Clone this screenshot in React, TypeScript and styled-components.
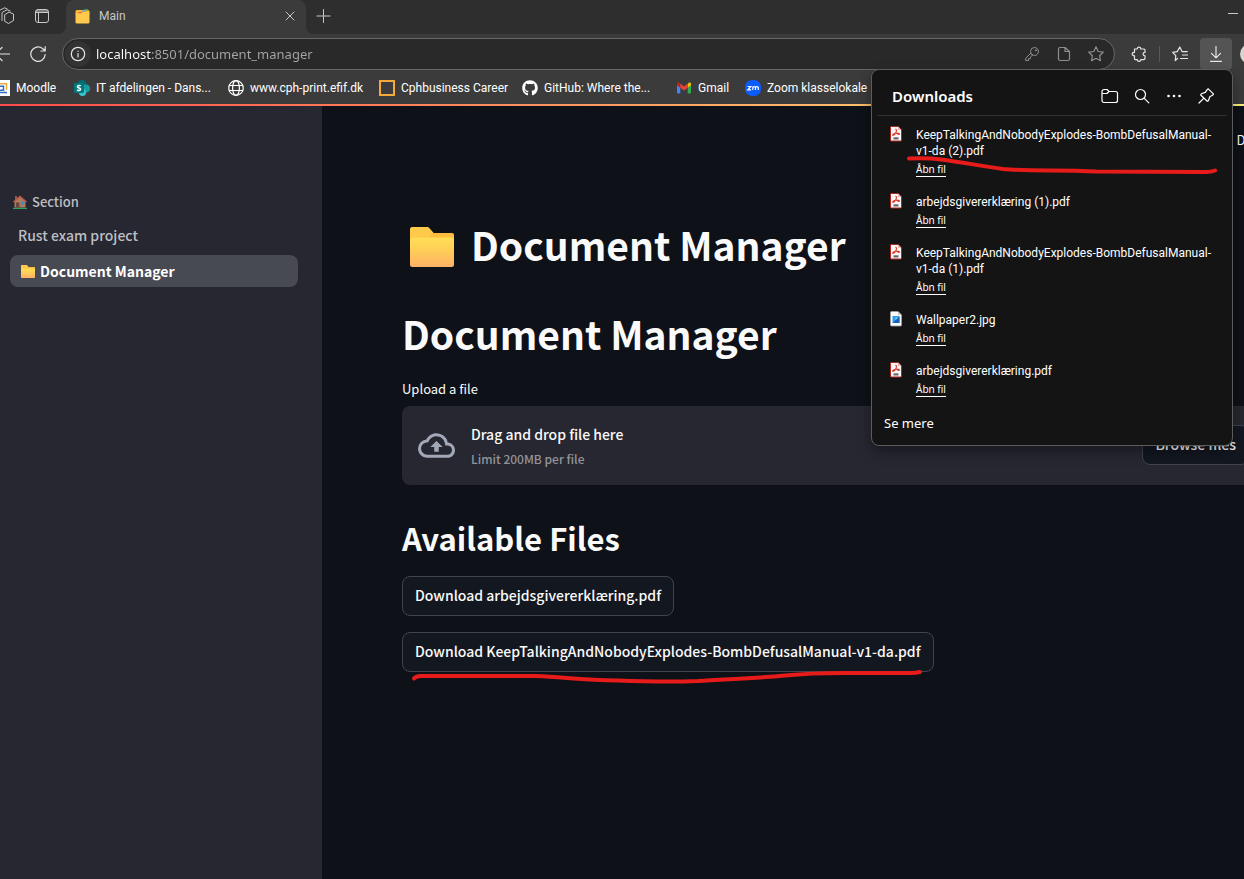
import React from 'react';
import styled, { createGlobalStyle } from 'styled-components';
import { FaGithub } from 'react-icons/fa';
import { MdOutlineCloudUpload } from 'react-icons/md';

const uiFont = `'Noto Sans', 'Open Sans', sans-serif`;
const labelFont = `Roboto, 'Noto Sans', sans-serif`;
const appFont = `'Noto Sans CJK SC', 'Noto Sans CJK JP', 'Noto Sans', sans-serif`;

const GlobalStyle = createGlobalStyle`
  *, *::before, *::after { box-sizing: border-box; }
  html, body, #root { height: 100%; }
  body { margin: 0; background: #0e1117; overflow: hidden; }
  button, input { font: inherit; color: inherit; margin: 0; }
  svg { display: block; flex: none; }
`;

/* ---------- Browser chrome ---------- */

const Window = styled.div`
  position: relative;
  display: flex;
  flex-direction: column;
  min-height: 100vh;
  overflow: hidden;
  font-family: ${uiFont};
  color: #fff;
`;

const TabStrip = styled.div`
  display: flex;
  height: 34px;
  background: #2e2e2e;
  color: #c8c8c8;
`;

const StripActions = styled.div`
  display: flex;
  align-items: center;
  gap: 18px;
  width: 71px;
  margin-left: -5px;
  padding-bottom: 2px;
`;

const IconButton = styled.button<{ $w?: number; $h?: number; $active?: boolean }>`
  display: flex;
  align-items: center;
  justify-content: center;
  flex: none;
  width: ${p => p.$w ?? 16}px;
  height: ${p => p.$h ?? 16}px;
  padding: 0;
  border: 0;
  border-radius: 4px;
  background: ${p => (p.$active ? '#545454' : 'transparent')};
`;

const Tab = styled.div`
  position: relative;
  display: flex;
  align-items: center;
  width: 240px;
  padding: 0 8px 2px 9px;
  border-radius: 8px 8px 0 0;
  background: #3b3b3b;
  font-family: ${labelFont};
  font-size: 12px;

  &::before, &::after {
    content: '';
    position: absolute;
    bottom: 0;
    width: 8px;
    height: 8px;
  }
  &::before {
    left: -8px;
    background: radial-gradient(circle at 0 0, #2e2e2e 8px, #3b3b3b 8px);
  }
  &::after {
    right: -8px;
    background: radial-gradient(circle at 100% 0, #2e2e2e 8px, #3b3b3b 8px);
  }
`;

const TabTitle = styled.span`
  flex: 1;
  margin-left: 9px;
`;

const StripEnd = styled.div`
  display: flex;
  flex: 1;
  align-items: center;
  justify-content: space-between;
  padding: 0 6px 2px 9px;
`;

const Toolbar = styled.div`
  display: flex;
  align-items: center;
  height: 36px;
  padding-top: 4px;
  background: #3b3b3b;
  color: #e6e6e6;
`;

const NavButtons = styled.div`
  display: flex;
  align-items: center;
  gap: 20px;
  width: 68px;
  margin-left: -6px;
`;

const AddressBar = styled.label`
  display: flex;
  flex: 1;
  align-items: center;
  gap: 16px;
  height: 32px;
  padding: 0 10px 0 2px;
  border: 1px solid #676767;
  border-radius: 16px;
  background: #292929;
  color: #8f8f8f;
`;

const SiteInfo = styled.span`
  display: flex;
  align-items: center;
  justify-content: center;
  width: 26px;
  height: 26px;
  margin-right: -11px;
  border-radius: 13px;
  background: #333;
  color: #e6e6e6;
`;

const AddressInput = styled.input`
  flex: 1;
  min-width: 0;
  height: 24px;
  padding: 0;
  border: 0;
  outline: 0;
  font-size: 13px;
  background: linear-gradient(90deg, #fff 56px, #a6a6a6 56px);
  background-clip: text;
  -webkit-background-clip: text;
  -webkit-text-fill-color: transparent;
`;

const ToolActions = styled.div`
  display: flex;
  flex: none;
  align-items: center;
  width: 129px;
  padding-left: 16px;
`;

const Separator = styled.span`
  flex: none;
  width: 1px;
  height: 16px;
  margin: 0 12px;
  background: #5a5a5a;
`;

const DownloadsToggle = styled(IconButton)`
  margin-left: 12px;
`;

const Avatar = styled.span`
  flex: none;
  width: 20px;
  height: 20px;
  margin-left: 8px;
  border-radius: 10px;
  background: #d8d4cf;
`;

const BookmarkBar = styled.nav`
  display: flex;
  align-items: center;
  height: 34px;
  margin-left: -6px;
  padding-top: 1px;
  background: #3b3b3b;
  font-family: ${labelFont};
  font-size: 12px;
  line-height: 16px;
`;

const Bookmark = styled.a<{ $w: number }>`
  display: flex;
  align-items: center;
  flex: none;
  gap: 6px;
  width: ${p => p.$w}px;
  color: #fff;
  text-decoration: none;
  white-space: nowrap;
`;

/* ---------- Downloads flyout ---------- */

const Flyout = styled.section`
  position: absolute;
  top: 69px;
  right: 11px;
  z-index: 5;
  width: 362px;
  padding: 0 5px 12px;
  border: 1px solid #5c5c5c;
  border-radius: 8px;
  background: #141414;
  box-shadow: 0 6px 14px rgba(0, 0, 0, 0.35);
`;

const FlyoutHeader = styled.header`
  display: flex;
  align-items: center;
  height: 46px;
  padding: 7px 12px 0 15px;
  border-bottom: 1px solid #333;
`;

const FlyoutTitle = styled.h2`
  flex: 1;
  margin: 0;
  font-size: 15px;
  line-height: 20px;
  font-weight: 600;
`;

const FlyoutTools = styled.div`
  display: flex;
  gap: 14px;
  margin-top: -1px;
`;

const DownloadList = styled.ul`
  display: flex;
  flex-direction: column;
  gap: 16px;
  margin: 0;
  padding: 10px 0 16px 13px;
  list-style: none;
`;

const DownloadItem = styled.li`
  display: flex;
  gap: 14px;
`;

const DownloadText = styled.div`
  display: flex;
  flex-direction: column;
  align-items: flex-start;
  gap: 3px;
  width: 308px;
  padding-top: 1px;
  font-family: ${labelFont};
  font-size: 12px;
  line-height: 16px;
`;

const OpenLink = styled.a`
  height: 15px;
  border-bottom: 1px solid #fff;
  color: #fff;
  font-family: ${uiFont};
  font-size: 10px;
  line-height: 14px;
  text-decoration: none;
`;

const MoreLink = styled.a`
  display: block;
  padding-left: 7px;
  color: #fff;
  font-size: 13px;
  line-height: 20px;
  text-decoration: none;
`;

const MarkedRow = styled.div`
  position: relative;
`;

const PenStroke = styled.svg<{ $top: number; $left: number }>`
  position: absolute;
  top: ${p => p.$top}px;
  left: ${p => p.$left}px;
  pointer-events: none;
`;

/* ---------- Page ---------- */

const Page = styled.div`
  position: relative;
  display: flex;
  flex: 1;
  background: #0e1117;
  color: #fafafa;
  font-family: ${appFont};
`;

const Decoration = styled.div`
  position: absolute;
  top: 0;
  left: 0;
  right: -92px;
  height: 2px;
  background: linear-gradient(90deg, #ff4b4b, #fffd80);
`;

const Sidebar = styled.aside`
  flex: none;
  width: 322px;
  padding: 89px 24px 0 10px;
  background: #262730;
`;

const SectionTitle = styled.h3`
  display: flex;
  align-items: center;
  gap: 5px;
  margin: 0;
  padding-left: 3px;
  color: #bebfc3;
  font-size: 13px;
  line-height: 18px;
  font-weight: 500;
`;

const NavLink = styled.a<{ $active?: boolean }>`
  display: flex;
  align-items: center;
  gap: 5px;
  height: 32px;
  margin-top: ${p => (p.$active ? 4 : 8)}px;
  padding: 0 10px;
  padding-left: ${p => (p.$active ? 11 : 8)}px;
  border-radius: 8px;
  background: ${p => (p.$active ? '#474953' : 'transparent')};
  color: ${p => (p.$active ? '#fff' : '#bebfc3')};
  font-size: 14px;
  line-height: 20px;
  font-weight: ${p => (p.$active ? 700 : 500)};
  text-decoration: none;
`;

const Main = styled.main`
  flex: 1;
  min-width: 0;
  margin-right: -21px;
  padding: 24px 0 40px 80px;
`;

const AppHeader = styled.header`
  display: flex;
  justify-content: flex-end;
  height: 70px;
  margin-right: -14px;
`;

const DeployButton = styled.button`
  height: 24px;
  padding: 0;
  border: 0;
  background: none;
  font-size: 13px;
  line-height: 24px;
`;

const Heading = styled.h1`
  display: flex;
  align-items: center;
  margin: 0;
  padding: 20px 0 16px;
  font-size: 39px;
  line-height: 53px;
  font-weight: 700;

  svg { margin: 4px 17px 0 8px; }
`;

const UploadLabel = styled.label`
  display: block;
  padding-top: 1px;
  margin-bottom: 5px;
  font-size: 13px;
  line-height: 24px;
`;

const DropZone = styled.section`
  display: flex;
  align-items: center;
  height: 79px;
  padding: 0 16px 1px;
  border-radius: 8px;
  background: #262730;
  color: #a3a8b8;
`;

const DropText = styled.div`
  flex: 1;
  margin-left: 16px;
  padding-top: 2px;
`;

const DropTitle = styled.div`
  color: #fafafa;
  font-size: 14px;
  line-height: 24px;
  font-weight: 500;
`;

const DropHint = styled.div`
  margin-top: 1px;
  color: #93949a;
  font-size: 12px;
  line-height: 24px;
  font-weight: 500;
`;

const HiddenInput = styled.input`
  display: none;
`;

const OutlineButton = styled.button`
  height: 40px;
  padding: 0 12px 2px;
  border: 1px solid #41444c;
  border-radius: 8px;
  background: #131720;
  color: #fafafa;
  font-size: 14px;
  line-height: 24px;
  font-weight: 500;
  white-space: nowrap;
`;

const SubHeading = styled.h2`
  margin: 31px 0 16px;
  font-size: 31px;
  line-height: 44px;
  font-weight: 600;
`;

const FileList = styled.div`
  display: flex;
  flex-direction: column;
  align-items: flex-start;
  gap: 16px;
`;

/* ---------- Drawings ---------- */

const Line = ({ w = 16, h = 16, sw = 1, children }: { w?: number; h?: number; sw?: number; children: React.ReactNode }) => (
  <svg width={w} height={h} viewBox={`0 0 ${w} ${h}`} fill="none" stroke="currentColor" strokeWidth={sw} strokeLinecap="round" strokeLinejoin="round" aria-hidden="true">
    {children}
  </svg>
);

const FolderEmoji = ({ w, h, id }: { w: number; h: number; id: string }) => (
  <svg width={w} height={h} viewBox="0 0 44 40" preserveAspectRatio="none" aria-hidden="true">
    <defs>
      <linearGradient id={id} x1="0" y1="0" x2="0" y2="1">
        <stop offset="0" stopColor="#ffe055" />
        <stop offset="0.45" stopColor="#ffcd59" />
        <stop offset="1" stopColor="#ffb066" />
      </linearGradient>
    </defs>
    <path d="M0 3a3 3 0 0 1 3-3h13c1.500 0 2.500.4 3.500 1.500L23.500 6H42a2 2 0 0 1 2 2v8H0z" fill="#ffbe3d" />
    <path d="M0 3a3 3 0 0 1 3-3h13c1.500 0 2.500.4 3.500 1.500L23.500 6 18 10.500H0z" fill="#ffc94a" />
    <path d="M0 12.500A2.500 2.500 0 0 1 2.500 10.500H42a2 2 0 0 1 2 2V37.500a2.500 2.500 0 0 1-2.500 2.500h-39A2.500 2.500 0 0 1 0 37.500z" fill={`url(#${id})`} />
  </svg>
);

const HouseEmoji = () => (
  <svg width="14" height="14" viewBox="0 0 14 14" aria-hidden="true">
    <path d="M2 1h2v4H2z" fill="#8d5a4d" />
    <path d="M1.500 6 7 1.500 12.500 6v6.500h-11z" fill="#b07a5e" />
    <path d="M0 6.500 7 .5l7 6-.9 1L7 2.600.9 7.500z" fill="#b8594a" />
    <path d="M3 7.500h3.500v5H3z" fill="#6b4440" />
    <path d="M8 6.500h3.200v3.200H8z" fill="#2d8fd6" />
    <path d="M0 12.800h14V14H0z" fill="#2fa35c" />
  </svg>
);

const TabFavicon = () => (
  <svg width="15" height="15" viewBox="0 0 15 15" aria-hidden="true">
    <path d="M.5 4V2.500A1.500 1.500 0 0 1 2 1H13a1.500 1.500 0 0 1 1.500 1.500V5H.5z" fill="#ffb92e" />
    <path d="M9 .3h4v1.500H9z" fill="#4bb36b" />
    <path d="M6.500 1.500h4V3h-4z" fill="#8f9db5" />
    <path d="M3 3h4v1.500H3z" fill="#ef6b5a" />
    <path d="M.5 4.500H6.500L8 3H13A1.500 1.500 0 0 1 14.500 4.500V13a1.500 1.500 0 0 1-1.500 1.500H2A1.500 1.500 0 0 1 .5 13z" fill="#ffc94d" />
  </svg>
);

const PdfIcon = () => (
  <svg width="12" height="16" viewBox="0 0 12 16" aria-hidden="true">
    <path d="M1.500.5h6.700L11.500 4v10a1 1 0 0 1-1 1h-9a1 1 0 0 1-1-1v-12.500a1 1 0 0 1 1-1z" fill="#fbf6f6" stroke="#b3261e" />
    <path d="M8 .8V4h3.300z" fill="#e9b9b5" />
    <path d="M5.800 3.200c1.100.4.700 2 .1 3.300S3.600 9.500 2.700 9.300c-.5-.8 1-1.700 3.100-2s3.700 0 3.700.8-2.300.2-3.300-1.300" fill="none" stroke="#e2352b" strokeWidth="1.100" strokeLinecap="round" />
    <path d="M3.500 11.300h5v2.200h-5z" fill="#66686d" />
  </svg>
);

const ImageFileIcon = () => (
  <svg width="12" height="16" viewBox="0 0 12 16" aria-hidden="true">
    <path d="M1.500.5H8L11.500 4v10a1 1 0 0 1-1 1h-9a1 1 0 0 1-1-1V1.500a1 1 0 0 1 1-1z" fill="#fafafa" stroke="#a0a0a0" strokeWidth=".8" />
    <path d="M8 .5V4h3.500z" fill="#c8c8c8" />
    <path d="M2.500 5h7v7h-7z" fill="#2f9be8" />
    <path d="M2.500 12 9.500 5.500V12z" fill="#1763bd" />
    <path d="M5.500 6.500h2.500L5.500 9z" fill="#9fd4fa" />
  </svg>
);

const Star = 'M8 .8l2.200 4.700 5 .7-3.600 3.500.9 5L8 12.300l-4.500 2.400.9-5L.8 6.200l5-.7z';

const SharePointIcon = () => (
  <svg width="16" height="16" viewBox="0 0 16 16" aria-hidden="true">
    <circle cx="8" cy="4.500" r="4.500" fill="#036c70" />
    <circle cx="12" cy="8.500" r="4" fill="#1a9ba1" />
    <circle cx="8.500" cy="12.500" r="3.500" fill="#37c6d0" />
    <rect x="0" y="3" width="10" height="10" rx="1" fill="#03787c" />
    <path d="M6.700 6C5.900 5.100 3.400 5.200 3.400 6.700c0 1.700 3.200 1 3.200 2.600 0 1.500-2.400 1.600-3.400.6" fill="none" stroke="#fff" strokeWidth="1.500" />
  </svg>
);

const GlobeIcon = () => (
  <Line sw={1.2}>
    <circle cx="8" cy="8" r="7.300" />
    <ellipse cx="8" cy="8" rx="3.400" ry="7.300" />
    <path d="M1.300 5.500h13.400M1.300 10.500h13.400" />
  </Line>
);

const GmailIcon = () => (
  <svg width="16" height="16" viewBox="0 0 16 16" aria-hidden="true">
    <path d="M1 5v7.500a1 1 0 0 0 1 1h2.300V7.500z" fill="#4285f4" />
    <path d="M15 5v7.500a1 1 0 0 1-1 1h-2.300V7.500z" fill="#34a853" />
    <path d="M11.700 4v3.700L15 5.200V4c0-1.300-1.400-1.900-2.400-1.100z" fill="#fbbc04" />
    <path d="M4.300 4v3.700L1 5.200V4c0-1.300 1.400-1.900 2.400-1.100z" fill="#c5221f" />
    <path d="M4.300 7.700V3.600L8 6.400l3.700-2.800v4.100L8 10.500z" fill="#ea4335" />
  </svg>
);

const ZoomIcon = () => (
  <svg width="16" height="16" viewBox="0 0 16 16" aria-hidden="true">
    <rect width="16" height="16" rx="7" fill="#0b5cff" />
    <path d="M2.600 6.500h3.200L2.800 9.800h3.300M7.800 10V6.500M7.800 7.800c0-1.600 2.700-1.600 2.700 0V10M10.500 7.800c0-1.600 2.800-1.600 2.800 0V10" fill="none" stroke="#fff" strokeWidth="1.200" />
  </svg>
);

const MoodleIcon = () => (
  <svg width="16" height="16" viewBox="0 0 16 16" aria-hidden="true">
    <rect width="16" height="16" fill="#fff" />
    <path d="M0 3.700h12.500V10" fill="none" stroke="#f3a73c" strokeWidth="1.500" />
    <path d="M2 6.300h7.500v4H2M2 12.500h11" fill="none" stroke="#2c6fc4" strokeWidth="1.500" />
  </svg>
);

const SquareIcon = () => (
  <svg width="16" height="16" viewBox="0 0 16 16" aria-hidden="true">
    <rect x="1" y="1" width="14" height="14" fill="none" stroke="#f6a93b" strokeWidth="2" />
  </svg>
);

/* ---------- Data ---------- */

const bookmarks = [
  { label: 'Moodle', icon: <MoodleIcon />, w: 80 },
  { label: 'IT afdelingen - Dans...', icon: <SharePointIcon />, w: 154 },
  { label: 'www.cph-print.efif.dk', icon: <GlobeIcon />, w: 151 },
  { label: 'Cphbusiness Career', icon: <SquareIcon />, w: 143 },
  { label: 'GitHub: Where the...', icon: <FaGithub size={16} />, w: 154 },
  { label: 'Gmail', icon: <GmailIcon />, w: 69 },
  { label: 'Zoom klasselokale', icon: <ZoomIcon />, w: 130 },
];

const downloads = [
  { name: 'KeepTalkingAndNobodyExplodes-BombDefusalManual-v1-da (2).pdf', pdf: true },
  { name: 'arbejdsgivererklæring (1).pdf', pdf: true },
  { name: 'KeepTalkingAndNobodyExplodes-BombDefusalManual-v1-da (1).pdf', pdf: true },
  { name: 'Wallpaper2.jpg', pdf: false },
  { name: 'arbejdsgivererklæring.pdf', pdf: true },
];

const DownloadsFlyout = () => (
  <Flyout aria-label="Downloads">
    <FlyoutHeader>
      <FlyoutTitle>Downloads</FlyoutTitle>
      <FlyoutTools>
        <IconButton $w={18} aria-label="Open downloads folder">
          <Line w={18} sw={1.2}><path d="M1 3.500A2 2 0 0 1 3 1.500H6L8 3.500H14.500a2 2 0 0 1 2 2v7a2 2 0 0 1-2 2h-11.500a2 2 0 0 1-2-2zM1 5.500h5l2-2" /></Line>
        </IconButton>
        <IconButton $w={18} aria-label="Search downloads">
          <Line sw={1.2}><circle cx="6.500" cy="6.500" r="5" /><path d="M10.300 10.300 14.800 14.800" /></Line>
        </IconButton>
        <IconButton $w={18} aria-label="More options">
          <svg width="16" height="16" viewBox="0 0 16 16" fill="currentColor"><circle cx="2.500" cy="8" r="1.300" /><circle cx="8" cy="8" r="1.300" /><circle cx="13.500" cy="8" r="1.300" /></svg>
        </IconButton>
        <IconButton $w={18} aria-label="Pin downloads">
          <Line sw={1.2}><path d="M10.300.8 15.600 6.100l-1.200 1.200-2.600 1.400-1.400 4-1.200.6L2.700 7l.6-1.200 4-1.400L9 1.800zM5.700 10.300 1 15" /></Line>
        </IconButton>
      </FlyoutTools>
    </FlyoutHeader>
    <MarkedRow>
      <DownloadList>
        {downloads.map(d => (
          <DownloadItem key={d.name}>
            {d.pdf ? <PdfIcon /> : <ImageFileIcon />}
            <DownloadText>
              <span>{d.name}</span>
              <OpenLink href="#open">Åbn fil</OpenLink>
            </DownloadText>
          </DownloadItem>
        ))}
      </DownloadList>
      <PenStroke $top={38} $left={29} width="314" height="22" viewBox="0 0 314 22" aria-hidden="true">
        <path d="M3 4.500C14 4 24 4 35 5.500C55 8 75 12 97 15C125 17.500 155 15.500 190 17.500C230 18 265 18 300 18Q305 18 309 16.500" fill="none" stroke="#e81b1b" strokeWidth="4" strokeLinecap="round" />
      </PenStroke>
    </MarkedRow>
    <MoreLink href="#more">Se mere</MoreLink>
  </Flyout>
);

const App = () => (
  <>
    <GlobalStyle />
    <Window>
      <TabStrip>
        <StripActions>
          <IconButton $w={20} $h={18} aria-label="Workspaces">
            <Line w={20} h={18}><path d="M10 7.500 14 5l4.500 2v6.500L13.500 16.500 10 14.500zM7 13.500V5.500L12 2.700l3 1.200M4 11V3.700L9.500.8l2.500 1" /></Line>
          </IconButton>
          <IconButton $w={18} aria-label="Tab actions">
            <Line><rect x="1.500" y="1.500" width="13" height="13" rx="2.500" /><path d="M1.500 4.500h13M2 3h12M4.500 4.500v10" /></Line>
          </IconButton>
        </StripActions>
        <Tab>
          <TabFavicon />
          <TabTitle>Main</TabTitle>
          <IconButton aria-label="Close tab"><Line><path d="M4 4l8 8M12 4l-8 8" /></Line></IconButton>
        </Tab>
        <StripEnd>
          <IconButton aria-label="New tab"><Line><path d="M8.500 1.500v13M2 8h13" /></Line></IconButton>
          <IconButton $w={10} aria-label="Minimise"><Line w={10}><path d="M0 5.500h10" /></Line></IconButton>
        </StripEnd>
      </TabStrip>

      <Toolbar>
        <NavButtons>
          <IconButton aria-label="Back"><Line sw={1.2}><path d="M1.500 8h14M8 1.500 1.500 8 8 14.500" /></Line></IconButton>
          <IconButton aria-label="Reload"><Line sw={1.2}><path d="M15.200 8.500A7.200 7.200 0 1 1 12.500 2.500L15.200 4.800M15.200.7v4.300h-4.300" /></Line></IconButton>
        </NavButtons>
        <AddressBar>
          <SiteInfo><Line sw={1.2}><circle cx="8" cy="8" r="6.700" /><path d="M8 7.500v3.500M8 5.200v.1" /></Line></SiteInfo>
          <AddressInput aria-label="Address" defaultValue="localhost:8501/document_manager" spellCheck={false} />
          <IconButton aria-label="Passwords">
            <Line><circle cx="10.500" cy="5.500" r="4" /><circle cx="11.800" cy="4.300" r=".6" /><path d="M6.800 7.200 1.700 12.200v2.300h2.800v-1.700h1.800v-1.700L8.700 9" /></Line>
          </IconButton>
          <IconButton aria-label="Reading view">
            <Line sw={1.2}><path d="M2.500 3A1.500 1.500 0 0 1 4 1.500H9L13.500 5.500V13A1.500 1.500 0 0 1 12 14.500H4A1.500 1.500 0 0 1 2.500 13zM9 1.500v4h4.500" /></Line>
          </IconButton>
          <IconButton aria-label="Add to favourites"><Line sw={1.2}><path d={Star} /></Line></IconButton>
        </AddressBar>
        <ToolActions>
          <IconButton aria-label="Extensions">
            <Line sw={1.2}><path d="M3.500 3h2.700C6.200.5 9.800.5 9.800 3H13a1 1 0 0 1 1 1v2.300c-2.600 0-2.600 3.500 0 3.500V12.500a1.200 1.200 0 0 1-1.200 1.200H9.800c0 2.200-3.500 2.200-3.500 0H4.500a1 1 0 0 1-1-1V9.800C.5 9.800.5 6.300 3.500 6.300z" /></Line>
          </IconButton>
          <Separator />
          <IconButton aria-label="Favourites">
            <Line sw={1.2}><path d="M5.500 12.500 3.200 14.500 3.800 9.700.7 6.300l4.500-.7L7.800 1l2.200 4.600h5.300M10.500 9h5M8.500 12.500h7" /></Line>
          </IconButton>
          <DownloadsToggle $w={32} $h={32} $active aria-label="Downloads">
            <Line sw={1.2}><path d="M8 .5v11M3.500 7.300 8 11.800l4.500-4.500M2.500 15.300h11" /></Line>
          </DownloadsToggle>
          <Avatar />
        </ToolActions>
      </Toolbar>

      <BookmarkBar aria-label="Favourites bar">
        {bookmarks.map(b => (
          <Bookmark key={b.label} href="#bookmark" $w={b.w}>{b.icon}{b.label}</Bookmark>
        ))}
      </BookmarkBar>

      <DownloadsFlyout />

      <Page>
        <Sidebar>
          <SectionTitle><HouseEmoji />Section</SectionTitle>
          <NavLink href="#rust">Rust exam project</NavLink>
          <NavLink href="#documents" $active><FolderEmoji w={14} h={13} id="folder-nav" />Document Manager</NavLink>
        </Sidebar>
        <Main>
          <AppHeader><DeployButton>Deploy</DeployButton></AppHeader>
          <Heading><FolderEmoji w={44} h={40} id="folder-title" />Document Manager</Heading>
          <Heading>Document Manager</Heading>
          <UploadLabel htmlFor="upload">Upload a file</UploadLabel>
          <DropZone>
            <HiddenInput id="upload" type="file" />
            <MdOutlineCloudUpload size={37} />
            <DropText>
              <DropTitle>Drag and drop file here</DropTitle>
              <DropHint>Limit 200MB per file</DropHint>
            </DropText>
            <OutlineButton>Browse files</OutlineButton>
          </DropZone>
          <SubHeading>Available Files</SubHeading>
          <FileList>
            <OutlineButton>Download arbejdsgivererklæring.pdf</OutlineButton>
            <MarkedRow>
              <OutlineButton>Download KeepTalkingAndNobodyExplodes-BombDefusalManual-v1-da.pdf</OutlineButton>
              <PenStroke $top={36} $left={8} width="516" height="18" viewBox="0 0 516 18" aria-hidden="true">
                <path d="M4 10.500Q6 8 11 8H126C155 9 170 12.500 208 12.500C245 14 265 14 288 13C310 11 340 11 375 7.500C400 5 415 5 435 5H500Q506 5 510 4" fill="none" stroke="#e81b1b" strokeWidth="4" strokeLinecap="round" />
              </PenStroke>
            </MarkedRow>
          </FileList>
        </Main>
        <Decoration />
      </Page>
    </Window>
  </>
);

export default App;
